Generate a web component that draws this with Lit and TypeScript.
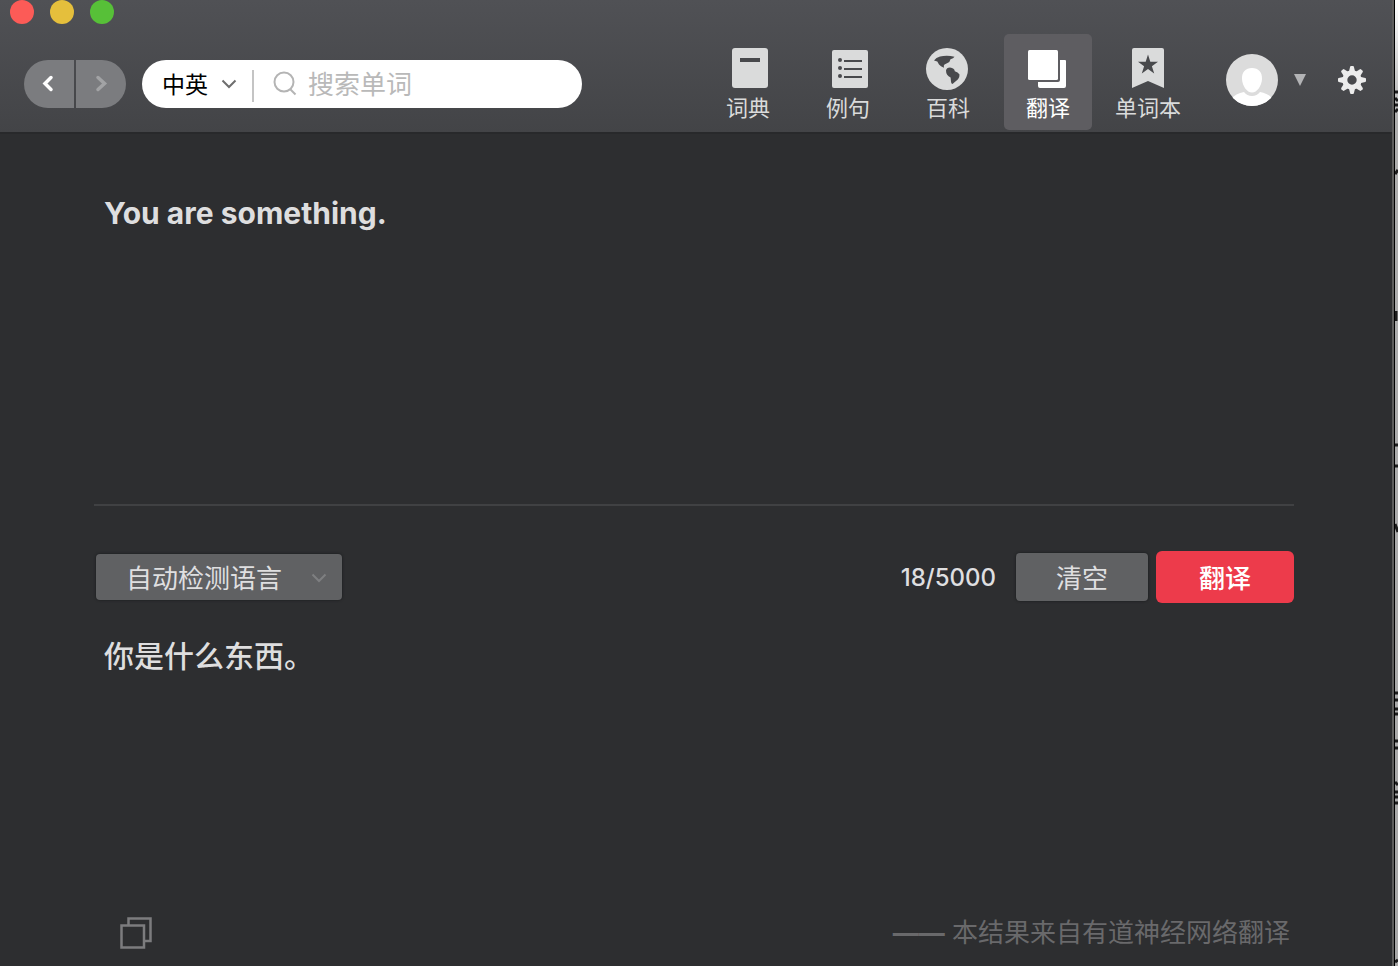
import { LitElement, html, css, svg } from "lit";
import { customElement, state } from "lit/decorators.js";
import { classMap } from "lit/directives/class-map.js";

const icons = {
  dict: svg`<rect x="5" y="0" width="36" height="40" rx="3" fill="currentColor"/>
    <rect x="13" y="10" width="20" height="4" fill="#48494c"/>`,
  sentence: svg`<rect x="5" y="2" width="36" height="38" rx="2" fill="currentColor"/>
    <g fill="#48494c"><circle cx="13" cy="12" r="2"/><circle cx="13" cy="20" r="2"/><circle cx="13" cy="28" r="2"/>
    <rect x="17" y="12" width="18" height="2"/><rect x="17" y="20" width="18" height="2"/><rect x="17" y="28" width="18" height="2"/></g>`,
  wiki: svg`<circle cx="20" cy="21" r="21" fill="currentColor"/>
    <g fill="#48494c"><path d="M7 12.5Q9 9.500 13 8.500Q20 7 27.500 8.700Q26.500 10.500 23.500 11.300Q23 14 20.500 15L17.500 16.500Q16.300 17.500 17 19.700Q13.500 18.600 12 16.500L10.300 13.600Z"/>
    <path d="M19 22.500Q19.500 19.800 23 19.600Q27.500 20.200 27.800 23.300Q31 24.300 32.500 26.600Q32.500 31 29 33L25.500 36Q24 35.500 24 33.500L23.600 29.500Q19 27.500 19 22.500Z"/></g>`,
  translate: svg`<rect x="1" y="2" width="30" height="30" rx="1.500" fill="currentColor"/>
    <path d="M11 34H31Q33 34 33 32V12H38Q39 12 39 13V38Q39 40 37 40H13Q11 40 11 38Z" fill="currentColor"/>`,
  book: svg`<path d="M7 0H35Q37 0 37 2V40L21 33L5 40V2Q5 0 7 0Z" fill="currentColor"/>
    <path d="M21 6.500L23.300 13.800H31L24.900 18.300L27.200 25.600L21 21.100L14.800 25.600L17.100 18.300L11 13.800H18.700Z" fill="#48494c"/>`,
};

type TabId = keyof typeof icons;

const tabs: { id: TabId; label: string }[] = [
  { id: "dict", label: "词典" },
  { id: "sentence", label: "例句" },
  { id: "wiki", label: "百科" },
  { id: "translate", label: "翻译" },
  { id: "book", label: "单词本" },
];

@customElement("app-toolbar")
export class AppToolbar extends LitElement {
  @state() private active: TabId = "translate";

  static styles = css`
    :host {
      display: block;
      background: linear-gradient(#505155, #434447);
      border-bottom: 2px solid #28292b;
      padding-bottom: 2px;
    }
    button, select, input {
      font: inherit;
      border: 0;
      padding: 0;
      margin: 0;
      background: none;
      color: inherit;
      outline: 0;
    }
    svg { display: block; flex: none; }
    .lights { display: flex; gap: 16px; padding-left: 10px; }
    .light { width: 24px; height: 24px; border-radius: 50%; }
    .close { background: #fc5b57; }
    .min { background: #e5bf3c; }
    .max { background: #57c038; }
    .bar {
      display: flex;
      align-items: center;
      margin-top: 10px;
      padding: 0 26px 0 24px;
    }
    .left { display: flex; flex: 1; gap: 16px; padding-top: 4px; min-width: 0; }
    .history { display: flex; gap: 2px; }
    .step {
      width: 50px;
      height: 48px;
      background: #7b7c7f;
      color: #fff;
      display: grid;
      place-items: center;
    }
    .back { border-radius: 24px 0 0 24px; }
    .forward { border-radius: 0 24px 24px 0; color: #a2a3a5; }
    .search {
      display: flex;
      align-items: center;
      flex: 0 1 440px;
      min-width: 0;
      height: 48px;
      border-radius: 24px;
      background: #fff;
      box-sizing: border-box;
      padding: 0 24px 0 20px;
    }
    .pick { display: grid; align-items: center; width: 75px; flex: none; }
    .pick > * { grid-area: 1 / 1; }
    .pick select {
      appearance: none;
      width: 75px;
      height: 48px;
      padding-top: 2px;
      font-size: 23px;
      color: #000;
    }
    .pick svg { justify-self: end; pointer-events: none; }
    .rule { width: 2px; height: 32px; margin: 4px 19px 0 15px; background: #c4c4c4; flex: none; }
    .search input { flex: 1; min-width: 0; height: 48px; margin-left: 11px; font-size: 26px; color: #222; }
    .search input::placeholder { color: #b9b9b9; opacity: 1; }
    .tabs { display: flex; gap: 12px; }
    .tab {
      width: 88px;
      height: 96px;
      box-sizing: border-box;
      padding-top: 14px;
      border-radius: 5px;
      display: flex;
      flex-direction: column;
      align-items: center;
      gap: 6px;
      color: #dadbdb;
      font-size: 22px;
      line-height: 24px;
      white-space: nowrap;
    }
    .tab.on { background: #5e5d61; color: #fff; }
    .account { display: flex; align-items: center; padding: 0 0 4px 34px; }
    .user { display: flex; align-items: center; gap: 16px; margin-right: 32px; }
  `;

  render() {
    return html`
      <div class="lights">
        <button class="light close" aria-label="关闭"></button>
        <button class="light min" aria-label="最小化"></button>
        <button class="light max" aria-label="缩放"></button>
      </div>
      <div class="bar">
        <div class="left">
          <div class="history">
            <button class="step back" aria-label="后退">
              <svg width="14" height="18" viewBox="0 0 14 18"><path d="M9 2.500L3 8.500L9 14.500" fill="none" stroke="currentColor" stroke-width="3.500" stroke-linecap="round"/></svg>
            </button>
            <button class="step forward" aria-label="前进">
              <svg width="14" height="18" viewBox="0 0 14 18"><path d="M4 2.500L10.500 8.500L4 14.500" fill="none" stroke="currentColor" stroke-width="3.500" stroke-linecap="round"/></svg>
            </button>
          </div>
          <div class="search">
            <div class="pick">
              <select aria-label="词典语种"><option>中英</option></select>
              <svg width="16" height="12" viewBox="0 0 16 12"><path d="M1.500 2.500L8 9L14.500 2.500" fill="none" stroke="#6e6e6e" stroke-width="2"/></svg>
            </div>
            <span class="rule"></span>
            <svg width="24" height="26" viewBox="0 0 24 26"><circle cx="11" cy="11" r="9.500" fill="none" stroke="#b4b4b4" stroke-width="2"/><path d="M17 18L22.500 23.500" stroke="#b4b4b4" stroke-width="2"/></svg>
            <input type="text" placeholder="搜索单词" aria-label="搜索单词" />
          </div>
        </div>
        <nav class="tabs">
          ${tabs.map(
            (t) => html`<button
              class=${classMap({ tab: true, on: t.id === this.active })}
              @click=${() => (this.active = t.id)}
            >
              <svg width="42" height="42" viewBox="0 0 42 42" overflow="visible">${icons[t.id]}</svg>
              <span>${t.label}</span>
            </button>`
          )}
        </nav>
        <div class="account">
          <button class="user" aria-label="账户">
            <svg width="52" height="52" viewBox="0 0 52 52">
              <defs><clipPath id="face"><circle cx="26" cy="26" r="26"/></clipPath></defs>
              <g clip-path="url(#face)">
                <rect width="52" height="52" fill="#dcdcdc"/>
                <path d="M26 14C32.500 14 36.300 18 36 25C35.700 32 31 38.500 26 38.500S16.300 32 16 25C15.700 18 19.500 14 26 14Z" fill="#fff"/>
                <path d="M4 46Q10 39 18 38Q21 42 26 42T34 38Q42 39 48 46V54H4Z" fill="#fff"/>
              </g>
            </svg>
            <svg width="12" height="14" viewBox="0 0 12 14"><path d="M0 1H12L6 13Z" fill="#b2b3b5"/></svg>
          </button>
          <button aria-label="设置">
            <svg width="28" height="28" viewBox="-14 -14 28 28">
              <g fill="#ececec">
                ${[0, 45, 90, 135, 180, 225, 270, 315].map(
                  (a) => svg`<path transform="rotate(${a})" d="M-3.200 -8L-1.900 -13.300Q-1.700 -14 -1 -14H1Q1.700 -14 1.900 -13.300L3.200 -8Z"/>`
                )}
              </g>
              <circle r="7.200" fill="none" stroke="#ececec" stroke-width="5"/>
            </svg>
          </button>
        </div>
      </div>
    `;
  }
}

@customElement("app-root")
export class AppRoot extends LitElement {
  @state() private source = "You are something.";

  static styles = css`
    :host {
      display: flex;
      height: 100vh;
      overflow: hidden;
      font-family: Inter, "Noto Sans CJK SC", sans-serif;
      background: #2d2e30;
    }
    button, select, textarea {
      font: inherit;
      border: 0;
      padding: 0;
      margin: 0;
      outline: 0;
      box-sizing: border-box;
    }
    svg { display: block; }
    .window {
      flex: 1;
      min-width: 0;
      display: flex;
      flex-direction: column;
      border-right: 2px solid #5c5c5b;
    }
    .main {
      flex: 1;
      min-height: 0;
      display: grid;
      grid-template-rows: 372fr 460fr;
      padding: 0 98px 0 94px;
    }
    .source {
      display: block;
      width: 100%;
      height: 100%;
      resize: none;
      background: none;
      border-bottom: 2px solid #404143;
      padding: 61px 10px 20px;
      font-size: 30px;
      line-height: 36px;
      font-weight: 700;
      color: #dededf;
    }
    .lower { display: flex; flex-direction: column; padding-top: 45px; min-height: 0; }
    .controls { display: flex; align-items: center; gap: 8px; font-size: 26px; color: #dfdfe0; }
    .lang {
      display: grid;
      align-items: center;
      width: 246px;
      margin: 0 auto 0 2px;
      border-radius: 4px;
      background: #606163;
      box-shadow: 0 0 2px 1px #232426;
    }
    .lang > * { grid-area: 1 / 1; }
    .lang select {
      appearance: none;
      height: 46px;
      padding: 2px 30px 0;
      background: none;
      color: inherit;
    }
    .lang svg { justify-self: end; margin: 2px 15px 0 0; pointer-events: none; }
    .count { font-size: 24px; font-weight: 500; margin-right: 12px; }
    .clear {
      width: 132px;
      height: 48px;
      padding-bottom: 2px;
      border-radius: 4px;
      background: #606163;
      color: inherit;
      box-shadow: 0 0 2px 1px #232426;
    }
    .go { width: 138px; height: 52px; padding-bottom: 2px; border-radius: 6px; background: #ed3b4b; color: #fff; font-weight: 500; }
    .result { flex: 1; margin: 0; padding: 31px 10px 0; font-size: 30px; line-height: 44px; font-weight: 500; color: #dededf; }
    .foot {
      display: flex;
      align-items: center;
      justify-content: space-between;
      padding: 0 4px 13px 26px;
      font-size: 26px;
      line-height: 40px;
      color: #69696b;
    }
    .dash { font-weight: 700; }
    .copy { background: none; }
    .behind {
      width: 3px;
      border-left: 1px solid #000;
      background: linear-gradient(#fff, #adadad 120px, #a6a6a6);
      overflow: hidden;
    }
  `;

  render() {
    return html`
      <div class="window">
        <app-toolbar></app-toolbar>
        <main class="main">
          <textarea
            class="source"
            aria-label="原文"
            spellcheck="false"
            .value=${this.source}
            @input=${(e: Event) => (this.source = (e.target as HTMLTextAreaElement).value)}
          ></textarea>
          <section class="lower">
            <div class="controls">
              <div class="lang">
                <select aria-label="翻译语言"><option>自动检测语言</option></select>
                <svg width="16" height="12" viewBox="0 0 16 12"><path d="M1.500 2.500L8 9L14.500 2.500" fill="none" stroke="#7e7f81" stroke-width="2"/></svg>
              </div>
              <span class="count">${this.source.length}/5000</span>
              <button class="clear" @click=${() => (this.source = "")}>清空</button>
              <button class="go">翻译</button>
            </div>
            <p class="result">你是什么东西。</p>
            <footer class="foot">
              <button class="copy" aria-label="复制">
                <svg width="32" height="32" viewBox="0 0 32 32" fill="none" stroke="#7c7c7e" stroke-width="2.500"><rect x="1.500" y="8.500" width="22.500" height="22"/><path d="M8.500 8.500V1.500H30.500V24H24"/></svg>
              </button>
              <span><span class="dash">——</span> 本结果来自有道神经网络翻译</span>
            </footer>
          </section>
        </main>
      </div>
      <div class="behind">
        <svg width="3" height="966" viewBox="0 0 3 966" stroke="#1c1c1c" stroke-width="3" fill="none">
          <path d="M0 92H3M0 98L3 101M0 105H3M0 112L3 109M0 174L3 170M1 311V321M0 445H3M0 466H3M0 524L3 532M0 693H3M0 700H3M0 709H3M0 714H3M0 741H3M0 748H3M0 782L3 785M0 792H3M0 797H3M0 803H3M0 962L3 960"/>
        </svg>
      </div>
    `;
  }
}
